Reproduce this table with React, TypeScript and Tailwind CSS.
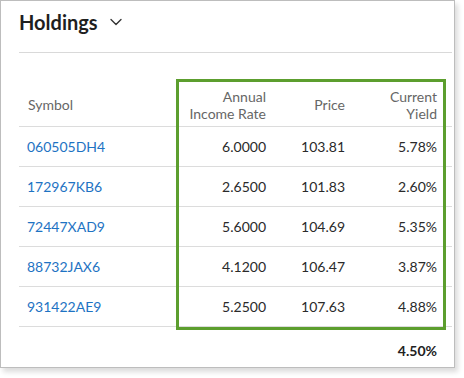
import React from "react";
import { ChevronDown } from "lucide-react";

const rows = [
  { sym: "060505DH4", rate: "6.0000", price: "103.81", yld: "5.78%" },
  { sym: "172967KB6", rate: "2.6500", price: "101.83", yld: "2.60%" },
  { sym: "72447XAD9", rate: "5.6000", price: "104.69", yld: "5.35%" },
  { sym: "88732JAX6", rate: "4.1200", price: "106.47", yld: "3.87%" },
  { sym: "931422AE9", rate: "5.2500", price: "107.63", yld: "4.88%" },
];

export default function App() {
  return (
    <div className="w-[464px] h-[378px] bg-white font-['Lato','Open_Sans',sans-serif]">
      <div className="relative w-[455px] h-[368px] border border-[#bdbdbd] bg-white shadow-[3px_4px_5px_rgba(0,0,0,0.14)] pl-[18px] pr-[2px]">
        <div className="h-[52px] border-b border-[#d9d9d9] pt-[9px] flex items-start">
          <span className="text-[20px] leading-[24px] font-bold text-[#1f1f1f]">Holdings</span>
          <ChevronDown className="ml-[8px] mt-[2px] text-[#333]" size={20} strokeWidth={1.6} />
        </div>
        <div className="h-[74px] flex items-end border-b border-[#dcdcdc] text-[14px] leading-[17px] text-[#666]">
          <div className="h-[43px] w-[156px] pl-[9px] flex items-center">Symbol</div>
          <div className="h-[43px] w-[91px] flex items-center justify-end text-right">
            <span>Annual<br />Income Rate</span>
          </div>
          <div className="h-[43px] w-[79px] flex items-center justify-end">Price</div>
          <div className="h-[43px] w-[92px] flex items-center justify-end text-right">
            <span>Current<br />Yield</span>
          </div>
        </div>
        {rows.map((r) => (
          <div key={r.sym} className="h-[40px] flex items-center border-b border-[#dcdcdc] text-[14px] leading-[17px] text-[#2a2a2a]">
            <div className="w-[156px] pl-[8px] text-[#1e73c3]">{r.sym}</div>
            <div className="w-[91px] text-right">{r.rate}</div>
            <div className="w-[79px] text-right">{r.price}</div>
            <div className="w-[92px] text-right">{r.yld}</div>
          </div>
        ))}
        <div className="pt-[15px] flex text-[14px] leading-[17px] font-bold text-[#222]">
          <div className="w-[418px] text-right">4.50%</div>
        </div>
        <div className="absolute left-[175px] top-[78px] w-[270px] h-[251px] border-[3px] border-[#5c9e2e]" />
      </div>
    </div>
  );
}
